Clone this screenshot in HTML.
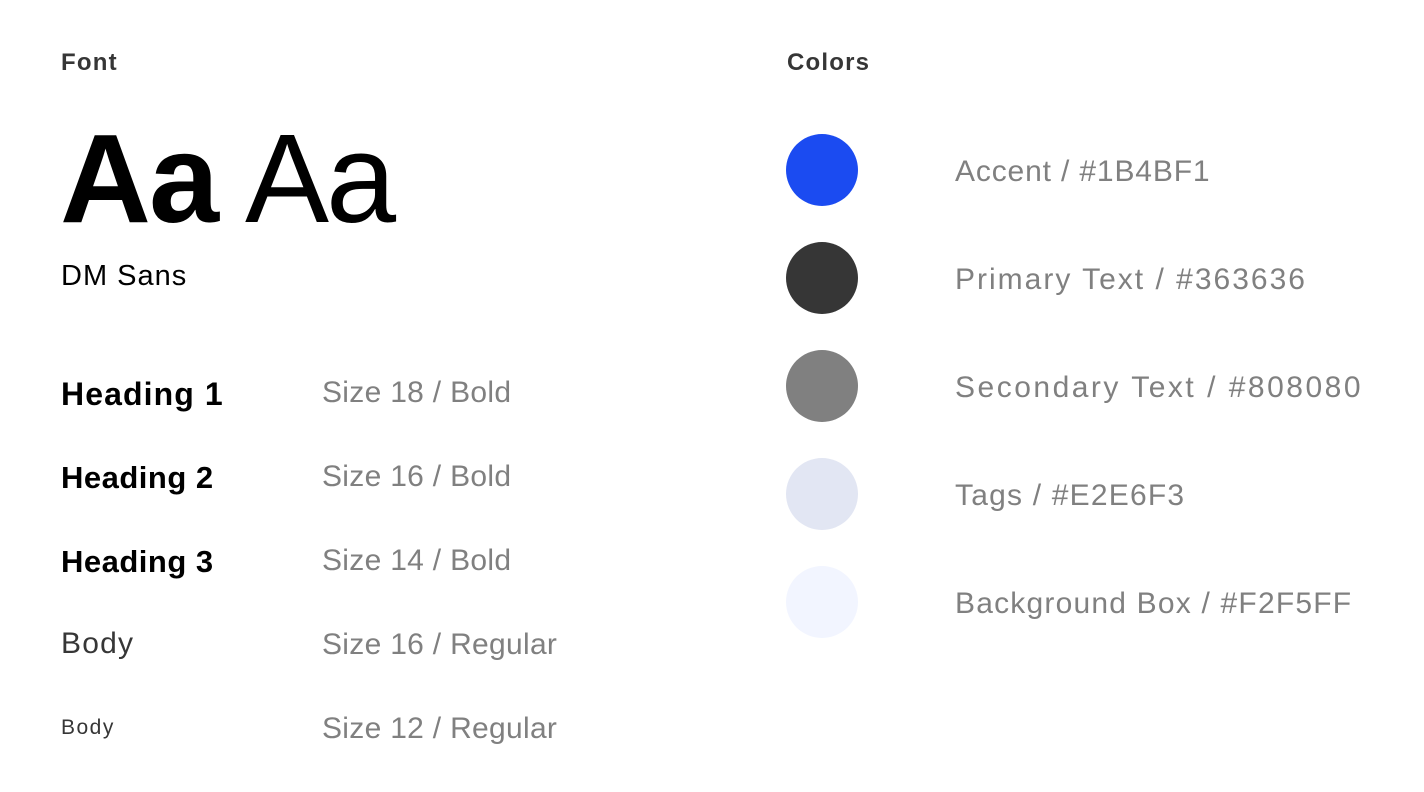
<!DOCTYPE html>
<html><head><meta charset="utf-8"><style>
body{margin:0;width:1424px;height:792px;background:#fff;position:relative;overflow:hidden;font-family:"Liberation Sans",sans-serif}
.t{position:absolute;line-height:1;white-space:nowrap}
.h{font-size:24px;font-weight:bold;color:#363636;letter-spacing:1.2px}
.g{color:#808080;font-size:30px;letter-spacing:0.3px}
.c{position:absolute;left:786px;width:72px;height:72px;border-radius:50%}
</style></head><body>
<div class="t h" style="left:61px;top:51px">Font</div>
<div class="t h" style="left:787px;top:51px">Colors</div>
<div class="t" style="left:60px;top:116px;font-size:126px;font-weight:bold;color:#000;letter-spacing:-2px">Aa</div>
<div class="t" style="left:245px;top:116px;font-size:126px;color:#000;letter-spacing:-3px">Aa</div>
<div class="t" style="left:61px;top:262px;font-size:29px;color:#000;letter-spacing:1px">DM Sans</div>

<div class="t" style="left:61px;top:378px;font-size:32px;font-weight:bold;color:#000;letter-spacing:1.1px">Heading 1</div>
<div class="t" style="left:61px;top:462px;font-size:31px;font-weight:bold;color:#000;letter-spacing:0.5px">Heading 2</div>
<div class="t" style="left:61px;top:546px;font-size:31px;font-weight:bold;color:#000;letter-spacing:0.5px">Heading 3</div>
<div class="t" style="left:61px;top:629px;font-size:30px;color:#363636;letter-spacing:1.2px">Body</div>
<div class="t" style="left:61px;top:717px;font-size:21px;color:#363636;letter-spacing:1.5px">Body</div>

<div class="t g" style="left:322px;top:378px">Size 18 / Bold</div>
<div class="t g" style="left:322px;top:462px">Size 16 / Bold</div>
<div class="t g" style="left:322px;top:546px">Size 14 / Bold</div>
<div class="t g" style="left:322px;top:630px">Size 16 / Regular</div>
<div class="t g" style="left:322px;top:714px">Size 12 / Regular</div>

<div class="c" style="top:134px;background:#1B4BF1"></div>
<div class="c" style="top:242px;background:#363636"></div>
<div class="c" style="top:350px;background:#808080"></div>
<div class="c" style="top:458px;background:#E2E6F3"></div>
<div class="c" style="top:566px;background:#F2F5FF"></div>

<div class="t g" style="left:955px;top:157px;letter-spacing:0.85px">Accent / #1B4BF1</div>
<div class="t g" style="left:955px;top:265px;letter-spacing:2px">Primary Text / #363636</div>
<div class="t g" style="left:955px;top:373px;letter-spacing:2.5px">Secondary Text / #808080</div>
<div class="t g" style="left:955px;top:481px;letter-spacing:1.2px">Tags / #E2E6F3</div>
<div class="t g" style="left:955px;top:589px;letter-spacing:1.2px">Background Box / #F2F5FF</div>
</body></html>
